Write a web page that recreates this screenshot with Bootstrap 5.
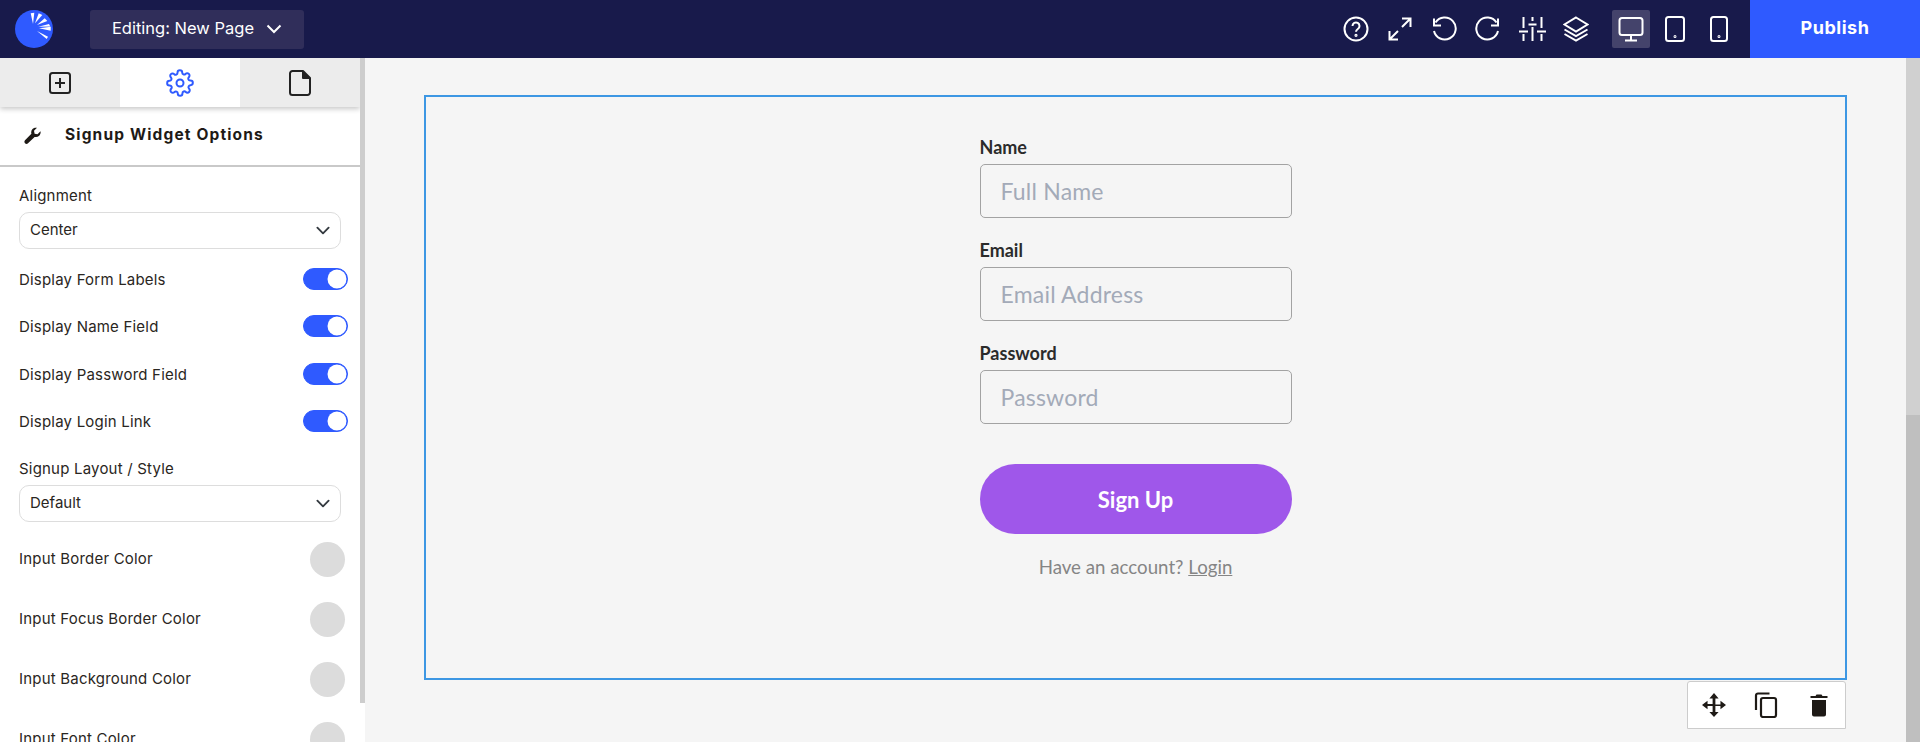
<!DOCTYPE html>
<html lang="en">
<head>
    <meta charset="UTF-8">
    <meta name="viewport" content="width=device-width, initial-scale=1.0">
    <title>Page Editor</title>
    <link rel="stylesheet" href="https://cdn.jsdelivr.net/npm/bootstrap@5.3.0/dist/css/bootstrap.min.css">
    <style>
        html, body { height: 100%; overflow: hidden; }
        body { font-family: "Inter", "Liberation Sans", sans-serif; background: #f5f5f5; color: #222; }
        svg { display: block; }

        /* top bar */
        .topbar { height: 58px; background: #181a4b; }
        .logo-wrap { width: 38px; height: 38px; margin-left: 15px; margin-right: 37px; }
        .editing-btn { width: 214px; height: 39px; padding-bottom: 8px; background: #302e5a; color: #fff; border: 0; border-radius: 3px; font-size: 16.5px; }
        .editing-btn:hover { background: #302e5a; color: #fff; }
        .editing-btn svg { margin-top: 2px; }
        .tool-btn { width: 44px; height: 38px; color: #fff; }
        .tool-group { margin-left: 11px; margin-right: 9px; }
        .tool-btn.is-active { background: #44436b; width: 38px; margin: 0 3px; border-radius: 2px; }
        .publish-btn { width: 170px; height: 58px; padding-bottom: 10px; background: #2f5aff; color: #fff; border: 0; border-radius: 0; font-weight: 700; font-size: 18px; letter-spacing: .5px; }
        .publish-btn:hover { background: #2f5aff; color: #fff; }

        /* left panel */
        .work-area { height: 684px; }
        .side-panel { width: 360px; background: #fff; overflow: hidden; }
        .panel-bar { width: 5px; background: #fff; }
        .panel-bar-thumb { height: 645px; background: #cdcdcd; }
        .tab-row { height: 49px; box-shadow: 0 2px 5px rgba(0,0,0,.22); position: relative; }
        .tab-cell { width: 120px; background: #ececec; color: #222; }
        .tab-cell.is-active { background: #fff; color: #2f5aff; }
        .panel-title { height: 60px; padding: 0 0 2px 24px; border-bottom: 2px solid #c9c9c9; }
        .panel-title h6 { margin: 0 0 0 24px; font-size: 15.5px; font-weight: 700; letter-spacing: 1.15px; color: #1e1a16; }
        .panel-body { padding: 20px 19px 0; font-size: 15px; letter-spacing: .2px; color: #2a2622; }
        .field-label { margin-bottom: 7px; line-height: 18px; }
        .panel-body .form-select { width: 322px; height: 37px; padding: 0 10px; font-size: 15px; color: #2a2622; border-color: #ddd; border-radius: 10px; background-size: 20px 15px; background-position: right 7px center; }
        .switch-list { margin-top: 6px; }
        .switch-row { height: 47.5px; }
        .switch-row span { padding-top: 2px; }
        .switch-row .form-check { margin: 0 -7px 0 0; padding: 0; min-height: 0; }
        .switch-row .form-check-input { width: 45px; height: 22px; margin: 0; float: none; display: block; background-color: #2f5aff; border-color: #2f5aff; background-image: url("data:image/svg+xml,%3csvg xmlns='http://www.w3.org/2000/svg' viewBox='-4 -4 8 8'%3e%3ccircle r='3.8' fill='%23fff'/%3e%3c/svg%3e"); }
        .switch-list + .field-label { margin-top: 15px; }
        .color-list { margin-top: 7px; }
        .color-row { height: 60px; }
        .color-dot { width: 35px; height: 35px; border-radius: 50%; background: #dcdcdc; margin-right: -4px; }

        /* canvas */
        .stage { padding: 37px 0 0 59px; }
        .widget-box { width: 1423px; height: 585px; border: 2px solid #3d97e3; padding-top: 39px; font-family: "Lato", "Open Sans", sans-serif; }
        .signup-form { width: 312px; }
        .signup-form .form-label { margin-bottom: 7px; line-height: 20px; font-size: 18px; font-weight: 700; color: #2b2b2b; }
        .signup-form .form-control { height: 54px; padding: 0 20px; font-size: 23px; letter-spacing: .2px; background: transparent; border-color: #a3a3a3; border-radius: 5px; }
        .signup-form .form-control::placeholder { color: #a3aab8; }
        .form-gap { margin-bottom: 21px; }
        .signup-btn { height: 70px; margin-top: 40px; background: #9f57ea; border: 0; border-radius: 35px; color: #fff; font-size: 22px; font-weight: 700; }
        .signup-btn:hover { background: #9f57ea; color: #fff; }
        .login-note { margin-top: 22px; line-height: 22px; font-size: 18.7px; color: #858585; }
        .login-note a { color: #858585; }
        .widget-tools { width: 159px; height: 48px; margin: 1px 0 0 1263px; background: #fff; border: 1px solid #ccc; border-radius: 3px 3px 0 0; color: #1e1a16; }
        .widget-tool { width: 53px; }

        /* page scrollbar */
        .page-bar { width: 14px; background: #d0d0d0; }
        .page-bar-thumb { height: 327px; background: #bfbfbf; }
    </style>
</head>
<body>
    <!-- Top bar -->
    <header class="topbar d-flex align-items-center">
        <div class="logo-wrap flex-shrink-0">
            <svg width="38" height="38" viewBox="0 0 38 38">
                <circle cx="19" cy="19" r="19" fill="#2f5aff"/>
                <g fill="#fff">
                    <path d="M18 14 15.700 3.300l3.600-.6z"/>
                    <path d="M20 13.300 23.700 3.300 27.300 5z"/>
                    <path d="M22 15 29.700 8.300 32.300 11z"/>
                    <path d="M23.300 16.700 34 14l1.300 2.600z"/>
                    <path d="M24 18.300 35.700 16.700v4z"/>
                    <path d="M22 21 33 26.700 31.700 29z"/>
                </g>
            </svg>
        </div>
        <button class="btn editing-btn d-flex align-items-center justify-content-center gap-2 flex-shrink-0" type="button">
            Editing: New Page
            <svg class="ms-1" width="16" height="10" viewBox="0 0 16 10" fill="none" stroke="#fff" stroke-width="2"><path d="M1.500 1.500 8 8l6.500-6.500"/></svg>
        </button>

        <div class="d-flex align-items-center ms-auto">
            <div class="tool-btn d-flex align-items-center justify-content-center">
                <svg width="26" height="26" viewBox="0 0 26 26" fill="none" stroke="#fff" stroke-width="2"><circle cx="13" cy="13" r="11.500"/><path d="M9.500 10a3.500 3.500 0 1 1 5.300 3c-1.200.8-1.800 1.400-1.800 2.800"/><circle cx="13" cy="19.300" r=".6"/></svg>
            </div>
            <div class="tool-btn d-flex align-items-center justify-content-center">
                <svg width="24" height="24" viewBox="0 0 24 24" fill="none" stroke="#fff" stroke-width="2"><path d="M14 1.500h8.500V10M22 2l-8 8M10 22.500H1.500V14M2 22l8-8"/></svg>
            </div>
            <div class="tool-btn d-flex align-items-center justify-content-center">
                <svg width="26" height="26" viewBox="0 0 26 26" fill="none" stroke="#fff" stroke-width="2"><path d="M4.500 6.500A11 11 0 1 1 3 15"/><path d="M3 2.500v7h7"/></svg>
            </div>
            <div class="tool-btn d-flex align-items-center justify-content-center">
                <svg width="26" height="26" viewBox="0 0 26 26" fill="none" stroke="#fff" stroke-width="2"><path d="M21.500 6.500A11 11 0 1 0 23 15"/><path d="M23 2.500v7h-7"/></svg>
            </div>
            <div class="tool-btn d-flex align-items-center justify-content-center">
                <svg width="27" height="24" viewBox="0 0 27 24" fill="none" stroke="#fff" stroke-width="2"><path d="M4.500 0v11M4.500 17v7M13.500 0v4M13.500 10v14M22.500 0v11M22.500 17v7M0 14.500h9M9.500 7.500h8M18 14.500h9"/></svg>
            </div>
            <div class="tool-btn d-flex align-items-center justify-content-center">
                <svg width="26" height="26" viewBox="0 0 26 26" fill="none" stroke="#fff" stroke-width="2"><path d="M13 1.500 24.500 8.500 13 15.500 1.500 8.500z"/><path d="M1.500 13.500 13 20 24.500 13.500M1.500 18 13 24.500 24.500 18"/></svg>
            </div>
            <div class="tool-group d-flex align-items-center">
                <div class="tool-btn is-active d-flex align-items-center justify-content-center">
                    <svg width="26" height="26" viewBox="0 0 26 26" fill="none" stroke="#fff" stroke-width="2"><rect x="1.500" y="2" width="23" height="17" rx="2.500"/><path d="M13 19v5M7 24.500h12"/></svg>
                </div>
                <div class="tool-btn d-flex align-items-center justify-content-center">
                    <svg width="20" height="26" viewBox="0 0 20 26" fill="none" stroke="#fff" stroke-width="2"><rect x="1" y="1" width="18" height="24" rx="2.500"/><circle cx="10" cy="20.500" r=".5"/></svg>
                </div>
                <div class="tool-btn d-flex align-items-center justify-content-center">
                    <svg width="18" height="26" viewBox="0 0 18 26" fill="none" stroke="#fff" stroke-width="2"><rect x="1" y="1" width="16" height="24" rx="2.500"/><circle cx="9" cy="20.500" r=".5"/></svg>
                </div>
            </div>
            <button class="btn publish-btn" type="button">Publish</button>
        </div>
    </header>

    <div class="work-area d-flex">
        <!-- Left panel -->
        <aside class="side-panel flex-shrink-0">
            <div class="tab-row d-flex">
                <div class="tab-cell d-flex align-items-center justify-content-center">
                    <svg width="24" height="24" viewBox="0 0 24 24" fill="none" stroke="currentColor" stroke-width="2"><rect x="2" y="2" width="20" height="20" rx="2.500"/><path d="M12 7v10M7 12h10"/></svg>
                </div>
                <div class="tab-cell is-active d-flex align-items-center justify-content-center">
                    <svg width="28" height="28" viewBox="0 0 24 24" fill="none" stroke="currentColor" stroke-width="1.700" stroke-linejoin="round"><circle cx="12" cy="12" r="3"/><path d="M19.400 15a1.650 1.650 0 0 0 .33 1.820l.06.06a2 2 0 1 1-2.830 2.830l-.06-.06a1.650 1.650 0 0 0-2.800 1.170V21a2 2 0 1 1-4 0v-.09a1.650 1.650 0 0 0-2.800-1.170l-.06.06a2 2 0 1 1-2.830-2.830l.06-.06a1.650 1.650 0 0 0-1.170-2.800H3a2 2 0 1 1 0-4h.09a1.650 1.650 0 0 0 1.170-2.800l-.06-.06a2 2 0 1 1 2.830-2.830l.06.06a1.650 1.650 0 0 0 2.800-1.170V3a2 2 0 1 1 4 0v.09a1.650 1.650 0 0 0 2.800 1.170l.06-.06a2 2 0 1 1 2.830 2.830l-.06.06a1.650 1.650 0 0 0 1.170 2.800H21a2 2 0 1 1 0 4h-.09a1.650 1.650 0 0 0-1.510 1z"/></svg>
                </div>
                <div class="tab-cell d-flex align-items-center justify-content-center">
                    <svg width="22" height="26" viewBox="0 0 22 26" fill="none" stroke="currentColor" stroke-width="2" stroke-linejoin="round"><path d="M3.500 1H14l7 7v14.500a2.500 2.500 0 0 1-2.500 2.500h-15A2.500 2.500 0 0 1 1 22.500v-19A2.500 2.500 0 0 1 3.500 1z"/><path d="M14 1v7h7" fill="currentColor"/></svg>
                </div>
            </div>

            <div class="panel-title d-flex align-items-center">
                <svg width="17" height="17" viewBox="0 0 17 17" fill="#1e1a16"><path d="M16.500 4.200c.4 1.700-.1 3.400-1.300 4.600-1.300 1.200-3 1.600-4.600 1.100L4 16.300c-.8.800-2.200.8-3 0s-.8-2.200 0-3L7.400 6.700C6.900 5.100 7.300 3.400 8.500 2.100 9.700.9 11.400.400 13 .8l-3 3 .6 2.900 2.900.6z"/></svg>
                <h6>Signup Widget Options</h6>
            </div>

            <div class="panel-body">
                <div class="field-label">Alignment</div>
                <select class="form-select"><option>Center</option></select>

                <div class="switch-list">
                    <div class="switch-row d-flex align-items-center justify-content-between">
                        <span>Display Form Labels</span>
                        <div class="form-check form-switch"><input class="form-check-input" type="checkbox" checked></div>
                    </div>
                    <div class="switch-row d-flex align-items-center justify-content-between">
                        <span>Display Name Field</span>
                        <div class="form-check form-switch"><input class="form-check-input" type="checkbox" checked></div>
                    </div>
                    <div class="switch-row d-flex align-items-center justify-content-between">
                        <span>Display Password Field</span>
                        <div class="form-check form-switch"><input class="form-check-input" type="checkbox" checked></div>
                    </div>
                    <div class="switch-row d-flex align-items-center justify-content-between">
                        <span>Display Login Link</span>
                        <div class="form-check form-switch"><input class="form-check-input" type="checkbox" checked></div>
                    </div>
                </div>

                <div class="field-label">Signup Layout / Style</div>
                <select class="form-select"><option>Default</option></select>

                <div class="color-list">
                    <div class="color-row d-flex align-items-center justify-content-between">
                        <span>Input Border Color</span><div class="color-dot"></div>
                    </div>
                    <div class="color-row d-flex align-items-center justify-content-between">
                        <span>Input Focus Border Color</span><div class="color-dot"></div>
                    </div>
                    <div class="color-row d-flex align-items-center justify-content-between">
                        <span>Input Background Color</span><div class="color-dot"></div>
                    </div>
                    <div class="color-row d-flex align-items-center justify-content-between">
                        <span>Input Font Color</span><div class="color-dot"></div>
                    </div>
                </div>
            </div>
        </aside>
        <div class="panel-bar flex-shrink-0"><div class="panel-bar-thumb"></div></div>

        <!-- Canvas -->
        <main class="stage flex-grow-1">
            <div class="widget-box d-flex justify-content-center">
                <form class="signup-form d-flex flex-column">
                    <div class="form-gap">
                        <label class="form-label">Name</label>
                        <input class="form-control" type="text" placeholder="Full Name">
                    </div>
                    <div class="form-gap">
                        <label class="form-label">Email</label>
                        <input class="form-control" type="text" placeholder="Email Address">
                    </div>
                    <div>
                        <label class="form-label">Password</label>
                        <input class="form-control" type="password" placeholder="Password">
                    </div>
                    <button class="btn signup-btn" type="button">Sign Up</button>
                    <div class="login-note text-center">Have an account? <a href="#">Login</a></div>
                </form>
            </div>
            <div class="widget-tools d-flex align-items-center">
                <div class="widget-tool d-flex justify-content-center">
                    <svg width="24" height="24" viewBox="0 0 26 26" fill="currentColor"><path d="M13 0l5 6h-3.500v6.500H20V8.500l6 4.500-6 4.500v-3.500h-5.500v6.500H18L13 26l-5-5.500h3.500V14H6v3.500L0 13l6-4.500V12h5.500V6H8z"/></svg>
                </div>
                <div class="widget-tool d-flex justify-content-center">
                    <svg width="24" height="26" viewBox="0 0 24 26" fill="none" stroke="currentColor" stroke-width="2.200"><path d="M15.500 1.500H4A2 2 0 0 0 2 3.500V18"/><rect x="7" y="6" width="15" height="19" rx="2"/></svg>
                </div>
                <div class="widget-tool d-flex justify-content-center">
                    <svg width="20" height="24" viewBox="0 0 20 24" fill="currentColor"><path d="M3 7h14v14.500a2 2 0 0 1-2 2H5a2 2 0 0 1-2-2zM1.500 3h5l1-1.500h5L13.500 3h5v2h-17z"/></svg>
                </div>
            </div>
        </main>

        <div class="page-bar flex-shrink-0 d-flex flex-column justify-content-end"><div class="page-bar-thumb"></div></div>
    </div>

    <script src="https://cdn.jsdelivr.net/npm/bootstrap@5.3.0/dist/js/bootstrap.bundle.min.js"></script>
</body>
</html>
